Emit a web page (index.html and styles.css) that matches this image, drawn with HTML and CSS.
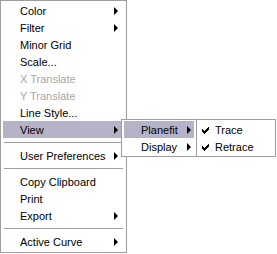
FILE: index.html
```html
<!DOCTYPE html>
<html lang="en">
<head>
    <meta charset="UTF-8">
    <title>Menu</title>
    <link rel="stylesheet" href="styles.css">
</head>
<body>
    <div class="stage">
        <div class="menu main-menu">
            <div class="item">Color <span class="arrow"></span></div>
            <div class="item">Filter <span class="arrow"></span></div>
            <div class="item">Minor Grid</div>
            <div class="item">Scale...</div>
            <div class="item disabled">X Translate</div>
            <div class="item disabled">Y Translate</div>
            <div class="item">Line Style...</div>
            <div class="item active">View <span class="arrow"></span></div>
            <div class="sep"></div>
            <div class="item">User Preferences <span class="arrow"></span></div>
            <div class="sep"></div>
            <div class="item">Copy Clipboard</div>
            <div class="item">Print</div>
            <div class="item">Export <span class="arrow"></span></div>
            <div class="sep"></div>
            <div class="item">Active Curve <span class="arrow"></span></div>
        </div>

        <div class="menu sub-view">
            <div class="item active">Planefit <span class="arrow"></span></div>
            <div class="item">Display <span class="arrow"></span></div>
        </div>

        <div class="menu sub-planefit">
            <div class="item checked"><span class="check"></span>Trace</div>
            <div class="item checked"><span class="check"></span>Retrace</div>
        </div>
    </div>
</body>
</html>
```

FILE: styles.css
```css
body {
    margin: 0;
    background: #ffffff;
    font-family: "Liberation Sans", Arial, sans-serif;
    font-size: 11px;
    color: #000000;
}
.stage {
    position: relative;
    width: 277px;
    height: 254px;
}
.menu {
    background: #ffffff;
    border: 1px solid #9d9d9d;
    padding: 1px 2px;
    box-sizing: border-box;
}
.main-menu {
    width: 127px;
    padding-bottom: 2px;
}
.item {
    display: flex;
    align-items: center;
    justify-content: space-between;
    height: 17px;
    padding-left: 17px;
    padding-right: 6px;
    white-space: nowrap;
}
.item.active {
    background: #b5b3c8;
}
.item.disabled {
    color: #a7a6aa;
}
.arrow {
    width: 0;
    height: 0;
    border-top: 4px solid transparent;
    border-bottom: 4px solid transparent;
    border-left: 4px solid #000000;
}
.sep {
    height: 1px;
    margin: 4px 1px;
    background: #a0a0a0;
}
.sub-view {
    position: absolute;
    left: 121px;
    top: 119px;
    width: 76px;
}
.sub-view .item {
    padding-left: 17px;
    padding-right: 3px;
}
.sub-planefit {
    position: absolute;
    left: 196px;
    top: 119px;
    width: 80px;
}
.sub-planefit .item {
    justify-content: flex-start;
    padding-left: 3px;
}
.check {
    width: 7px;
    height: 7px;
    margin: 1px 6px 0 0;
    background:
        linear-gradient(#000, #000) 0 2px / 1px 3px no-repeat,
        linear-gradient(#000, #000) 1px 3px / 1px 3px no-repeat,
        linear-gradient(#000, #000) 2px 4px / 1px 3px no-repeat,
        linear-gradient(#000, #000) 3px 3px / 1px 3px no-repeat,
        linear-gradient(#000, #000) 4px 2px / 1px 3px no-repeat,
        linear-gradient(#000, #000) 5px 1px / 1px 3px no-repeat,
        linear-gradient(#000, #000) 6px 0 / 1px 3px no-repeat;
}
```
